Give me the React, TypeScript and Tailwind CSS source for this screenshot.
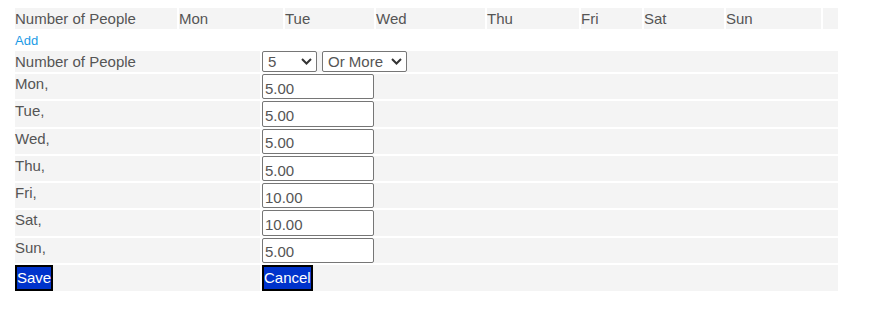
import { useState } from "react";

const days = ["Mon", "Tue", "Wed", "Thu", "Fri", "Sat", "Sun"];

const headerCols = [
  { label: "Number of People", w: "w-[162px]" },
  { label: "Mon", w: "w-[104px]" },
  { label: "Tue", w: "w-[89px]" },
  { label: "Wed", w: "w-[109px]" },
  { label: "Thu", w: "w-[92px]" },
  { label: "Fri", w: "w-[61px]" },
  { label: "Sat", w: "w-[80px]" },
  { label: "Sun", w: "w-[95px]" },
  { label: "", w: "w-[15px]" },
];

const Chevron = () => (
  <svg width="11" height="7" viewBox="0 0 11 7" className="pointer-events-none absolute right-[5px] top-[7px]">
    <path d="M1 1l4.5 4.5L10 1" fill="none" stroke="#333" strokeWidth="2" />
  </svg>
);

const Select = ({ value, options, w, onChange }: { value: string; options: string[]; w: string; onChange: (v: string) => void }) => (
  <div className={`relative ${w}`}>
    <select
      value={value}
      onChange={e => onChange(e.target.value)}
      className="block h-[21px] w-full appearance-none rounded-[2px] border border-[#767676] bg-white pl-[5px] text-[15px] leading-[19px] text-[#555]"
    >
      {options.map(o => (
        <option key={o}>{o}</option>
      ))}
    </select>
    <Chevron />
  </div>
);

const App = () => {
  const [people, setPeople] = useState("5");
  const [more, setMore] = useState("Or More");
  const [prices, setPrices] = useState(["5.00", "5.00", "5.00", "5.00", "10.00", "10.00", "5.00"]);

  return (
    <div className="px-[13px] pt-[6px] font-['Liberation_Sans',Arial,sans-serif] text-[15px] text-[#555]">
      <table className="w-[827px] border-separate border-spacing-[2px]">
        <thead>
          <tr>
            {headerCols.map((c, i) => (
              <th key={i} className={`${c.w} h-[21px] bg-[#f4f4f4] p-0 text-left align-middle font-normal leading-[17px]`}>
                {c.label}
              </th>
            ))}
          </tr>
        </thead>
      </table>

      <div className="px-[2px] h-[18px] leading-[18px]">
        <a className="cursor-pointer text-[13px] text-[#1a9be6]">Add</a>
      </div>

      <table className="w-[827px] border-separate border-spacing-[2px]">
        <tbody>
          <tr>
            <td className="w-[245px] h-[21px] bg-[#f4f4f4] p-0 align-middle leading-[17px]">Number of People</td>
            <td className="bg-[#f4f4f4] p-0 align-top">
              <div className="flex h-[21px] gap-[5px]">
                <Select value={people} options={["1", "2", "3", "4", "5", "6", "7", "8", "9", "10"]} w="w-[55px]" onChange={setPeople} />
                <Select value={more} options={["Or More", "Only"]} w="w-[85px]" onChange={setMore} />
              </div>
            </td>
          </tr>
          {days.map((d, i) => (
            <tr key={d}>
              <td className="h-[25.3px] bg-[#f4f4f4] p-0 align-top leading-[20px]">{d},</td>
              <td className="bg-[#f4f4f4] p-0 align-top">
                <input
                  type="text"
                  value={prices[i]}
                  onChange={e => {
                    const next = [...prices];
                    next[i] = e.target.value;
                    setPrices(next);
                  }}
                  className="block h-[25.3px] w-[112px] rounded-[2px] border border-[#767676] bg-white px-[2px] pt-[3px] text-[15px] leading-[19px] text-[#555]"
                />
              </td>
            </tr>
          ))}
          <tr>
            <td className="h-[26px] bg-[#f4f4f4] p-0 align-top">
              <button className="block h-[26px] border-2 border-black bg-[#0033cc] px-0 text-[15px] leading-[20px] text-white">
                Save
              </button>
            </td>
            <td className="bg-[#f4f4f4] p-0 align-top">
              <button className="block h-[26px] border-2 border-black bg-[#0033cc] px-0 text-[15px] leading-[20px] text-white">
                Cancel
              </button>
            </td>
          </tr>
        </tbody>
      </table>
    </div>
  );
};

export default App;
